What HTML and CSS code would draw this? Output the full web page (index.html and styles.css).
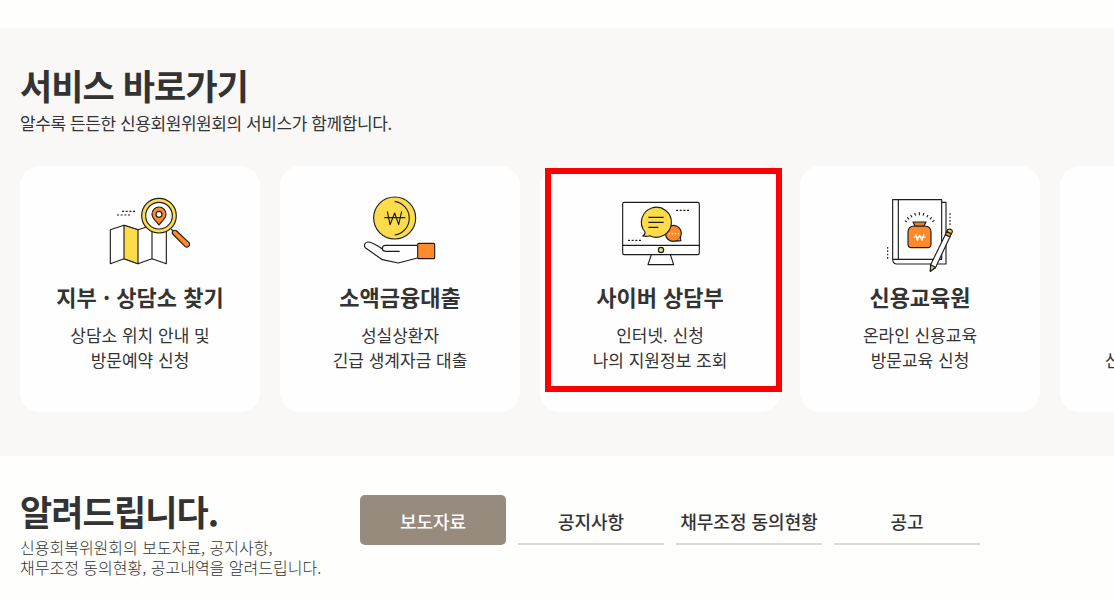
FILE: index.html
```
<!DOCTYPE html>
<html lang="ko">
<head>
  <meta charset="UTF-8">
  <meta name="viewport" content="width=device-width, initial-scale=1.0">
  <title>서비스 바로가기</title>
  <link rel="stylesheet" href="styles.css">
</head>
<body>

  <section class="service">
    <h2>서비스 바로가기</h2>
    <p class="service-desc">알수록 든든한 신용회원위원회의 서비스가 함께합니다.</p>

    <ul class="cards">
      <li class="card">
        <svg class="icon" viewBox="-30 0 300 270">
          <path d="M31 134 72 121 114 134 156 121 199 134V236L156 221 114 236 72 221 31 236Z" fill="#fff"/>
          <path class="yellow" d="M72 121 114 134V236L72 221Z"/>
          <path d="M156 121V221"/>
          <path d="M66 79H108M51 90H92" stroke-dasharray="6 5"/>
          <path d="M213 132 222 141"/>
          <path class="orange" d="M218 147C214 140 223 132 230 138L267 173C274 181 262 190 255 184Z"/>
          <circle class="yellow" cx="177" cy="92" r="52"/>
          <circle cx="177" cy="92" r="40" fill="#fff"/>
          <path class="orange" d="M177 120C171 111 156 101 156 87A21 21 0 0 1 198 87C198 101 183 111 177 120Z"/>
          <circle cx="177" cy="88" r="9" fill="#fff"/>
        </svg>
        <h3>지부 · 상담소 찾기</h3>
        <p>상담소 위치 안내 및<br>방문예약 신청</p>
      </li>
      <li class="card">
        <svg class="icon" viewBox="0 0 300 270">
          <circle class="yellow" cx="134" cy="99" r="63"/>
          <path d="M134 49A51 51 0 0 1 134 150"/>
          <path d="M112 79 120 119 134 84 146 119 155 79M103 98H166"/>
          <path d="M202 181H106C94 181 94 199 106 199H149M97 192C84 183 73 176 60 172C46 168 38 181 48 190L97 224 145 234 202 219"/>
          <rect class="orange" x="203" y="175" width="51" height="46" rx="3"/>
        </svg>
        <h3>소액금융대출</h3>
        <p>성실상환자<br>긴급 생계자금 대출</p>
      </li>
      <li class="card">
        <svg class="icon" viewBox="0 0 300 270">
          <path d="M124 209 114 239H191L181 209"/>
          <rect x="38" y="52" width="230" height="157" rx="5" fill="#fff"/>
          <path d="M38 181H268"/>
          <circle cx="153" cy="195" r="8" fill="#dfdf68"/>
          <path d="M198 76H240M54 166H94" stroke-dasharray="6 5"/>
          <circle class="orange" cx="190" cy="145" r="24"/>
          <path class="orange" d="M212 156Q210 163 213 167Q205 168 198 167"/>
          <path d="M176 146H207" stroke="#fff" stroke-dasharray="4 5"/>
          <path class="yellow" d="M105 141A45 45 0 1 1 119 152Q109 156 98 153Q106 149 105 141Z"/>
          <path d="M115 97H161M115 112H161M115 127H145"/>
        </svg>
        <h3>사이버 상담부</h3>
        <p>인터넷. 신청<br>나의 지원정보 조회</p>
        <span class="highlight"></span>
      </li>
      <li class="card">
        <svg class="icon" viewBox="0 0 300 270">
          <path d="M215 52H228V237H79Q68 236 68 223V44H215V223H68M85 44V223"/>
          <path d="M105 107 110 111M112 97 117 103M122 90 126 97M134 84 137 92M148 82V91M162 84 159 92M174 90 170 97M185 97 180 103M193 106 187 110"/>
          <path class="orange" d="M132 123H164Q183 124 183 141V177Q183 188 172 188H125Q114 188 114 177V141Q115 124 132 123Z"/>
          <path d="M129 111H168L162 123H135Z" fill="#d98032"/>
          <path d="M137 147 142 166 149 150 156 166 162 147M131 156H167" stroke="#fff"/>
          <path d="M240 85V121M53 186V223" stroke-dasharray="5 5"/>
          <path d="M226 149 240 155 196 249 181 259 182 239Z" fill="#fff"/>
          <path d="M182 239 196 247 181 259Z" fill="#c5d467"/>
          <path class="orange" d="M226 149 230 139 244 146 240 155Z"/>
          <path d="M230 139C232 128 249 132 247 141L244 146Z" fill="#e4d94e"/>
        </svg>
        <h3>신용교육원</h3>
        <p>온라인 신용교육<br>방문교육 신청</p>
      </li>
      <li class="card">
        <div class="icon"></div>
        <h3>&nbsp;</h3>
        <p>&nbsp;<br>신용상담 및 채무조정</p>
      </li>
    </ul>
  </section>

  <section class="notice">
    <div class="notice-intro">
      <h2>알려드립니다.</h2>
      <p>신용회복위원회의 보도자료, 공지사항,<br>채무조정 동의현황, 공고내역을 알려드립니다.</p>
    </div>
    <nav class="tabs">
      <a class="tab active">보도자료</a>
      <a class="tab">공지사항</a>
      <a class="tab">채무조정 동의현황</a>
      <a class="tab">공고</a>
    </nav>
  </section>

</body>
</html>
```
FILE: styles.css
```
* {
  box-sizing: border-box;
  margin: 0;
  padding: 0;
}
body {
  font-family: "Noto Sans CJK KR", sans-serif;
  background-color: #fefefd;
  color: #333;
  padding-top: 28px;
}
h2 {
  font-size: 35px;
  line-height: 50px;
  font-weight: 700;
  letter-spacing: -0.9px;
}
.service {
  height: 428px;
  padding: 32px 0 0 20px;
  background-color: #f9f8f7;
  overflow: hidden;
}
.service-desc {
  font-size: 17px;
  line-height: 26px;
  letter-spacing: -0.42px;
}
.cards {
  display: flex;
  gap: 20px;
  margin-top: 30px;
  list-style: none;
}
.card {
  position: relative;
  flex: 0 0 240px;
  height: 246px;
  padding-top: 19px;
  border-radius: 20px;
  background-color: #fefefe;
  text-align: center;
  white-space: nowrap;
}
.icon {
  display: block;
  width: 100px;
  height: 90px;
  margin: 0 auto;
  fill: none;
  stroke: #1c1c1c;
  stroke-width: 3.4;
  stroke-linejoin: round;
  stroke-linecap: butt;
}
.yellow {
  fill: #fddc4b;
}
.orange {
  fill: #ff8a2b;
}
.card h3 {
  margin-top: 5px;
  font-size: 22px;
  line-height: 32px;
  font-weight: 700;
}
.card p {
  margin-top: 10px;
  font-size: 17px;
  line-height: 25px;
}
.highlight {
  position: absolute;
  top: 2px;
  left: 5px;
  width: 237px;
  height: 224px;
  border: 6px solid #fe0000;
}
.notice {
  display: flex;
  padding: 30px 0 0 20px;
}
.notice-intro {
  width: 340px;
}
.notice-intro p {
  margin-top: 1px;
  font-size: 16px;
  line-height: 20px;
  font-weight: 300;
}
.tabs {
  display: flex;
  gap: 12px;
  margin-top: 9px;
}
.tab {
  width: 146px;
  height: 50px;
  border-bottom: 2px solid #d9d9d9;
  font-size: 18px;
  line-height: 52px;
  font-weight: 500;
  text-align: center;
  white-space: nowrap;
}
.tab.active {
  border: 0;
  border-radius: 5px;
  background-color: #968b7d;
  color: #fff;
}
```
